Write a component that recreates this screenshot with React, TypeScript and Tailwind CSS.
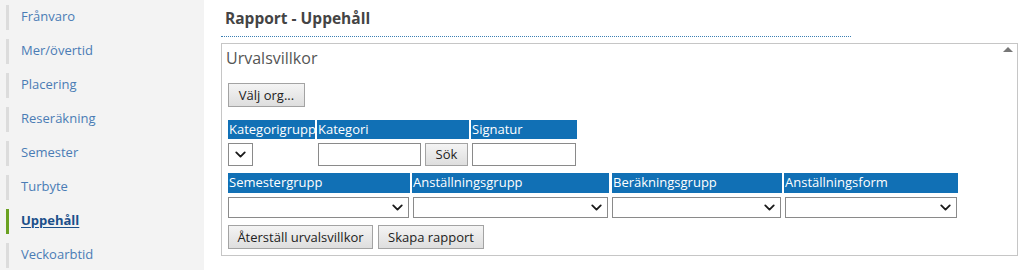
import { ChevronDown } from "lucide-react";

const menu = ["Frånvaro", "Mer/övertid", "Placering", "Reseräkning", "Semester", "Turbyte", "Uppehåll", "Veckoarbtid"];

function Header({ label, w }: { label: string; w: string }) {
  return <div className={`${w} h-full bg-[#1170b5] text-white leading-[19px] pl-[1px] whitespace-nowrap overflow-hidden`}>{label}</div>;
}

function Select({ w }: { w: string }) {
  return (
    <div className={`${w} h-[21px] border border-[#8a8a8a] bg-white flex items-center justify-end pr-[2px]`}>
      <ChevronDown size={17} strokeWidth={2.6} className="text-[#1a1a1a]" />
    </div>
  );
}

function Button({ label, w }: { label: string; w: string }) {
  return (
    <button className={`${w} h-[24px] border border-[#a3a3a3] bg-gradient-to-b from-[#f4f4f4] to-[#dedede] text-[#222] text-[13px] leading-none`}>
      {label}
    </button>
  );
}

export default function App() {
  return (
    <div className="flex w-[1023px] h-[270px] bg-white font-['Open_Sans',sans-serif] text-[13px]">
      <nav className="w-[204px] h-full bg-[#f3f3f3] pl-[6px]">
        {menu.map((item) => {
          const active = item === "Uppehåll";
          return (
            <div key={item} className="h-[34px] flex items-center">
              <div className={active ? "w-[3px] h-[25px] bg-[#6aa121]" : "w-[3px] h-[25px] bg-[#dcdcdc]"} />
              <span
                className={
                  active
                    ? "ml-[12px] text-[#1b4f8a] font-bold underline underline-offset-2"
                    : "ml-[12px] text-[#4a7cb5]"
                }
              >
                {item}
              </span>
            </div>
          );
        })}
      </nav>
      <main className="pl-[17px]">
        <div className="w-[630px] h-[37px] border-b border-dotted border-[#3c7fb3] pl-[4px] pt-[7px] text-[15.5px] font-bold text-[#444]">
          Rapport - Uppehåll
        </div>
        <section className="relative mt-[6px] w-[797px] h-[213px] border border-[#c6c6c6] pl-[6px] pt-[2px]">
          <div className="absolute right-[4px] top-[3px] w-0 h-0 border-l-[5px] border-r-[5px] border-b-[5px] border-l-transparent border-r-transparent border-b-[#777]" />
          <div className="text-[16px] text-[#555] -ml-[2px] h-[24px] leading-[24px]">Urvalsvillkor</div>
          <div className="mt-[13px]">
            <Button label="Välj org..." w="w-[77px]" />
          </div>
          <div className="mt-[13px] flex h-[19px] gap-[2px]">
            <Header label="Kategorigrupp" w="w-[87px]" />
            <Header label="Kategori" w="w-[152px]" />
            <Header label="Signatur" w="w-[106px]" />
          </div>
          <div className="mt-[4px] flex items-center h-[23px]">
            <div className="w-[25px] h-[23px] border border-[#8a8a8a] bg-white flex items-center justify-center">
              <ChevronDown size={17} strokeWidth={2.6} className="text-[#1a1a1a]" />
            </div>
            <input className="ml-[65px] w-[103px] h-[23px] border border-[#8a8a8a] bg-white outline-none" />
            <button className="ml-[4px] w-[43px] h-[23px] border border-[#a3a3a3] bg-gradient-to-b from-[#f4f4f4] to-[#dedede] text-[#222] leading-none">
              Sök
            </button>
            <input className="ml-[4px] w-[104px] h-[23px] border border-[#8a8a8a] bg-white outline-none" />
          </div>
          <div className="mt-[7px] flex h-[20px] gap-[2px]">
            <Header label="Semestergrupp" w="w-[182px]" />
            <Header label="Anställningsgrupp" w="w-[197px]" />
            <Header label="Beräkningsgrupp" w="w-[170px] ml-[1px]" />
            <Header label="Anställningsform" w="w-[174px]" />
          </div>
          <div className="mt-[4px] flex gap-[4px]">
            <Select w="w-[181px]" />
            <Select w="w-[195px]" />
            <Select w="w-[169px]" />
            <Select w="w-[172px]" />
          </div>
          <div className="mt-[7px] flex gap-[5px]">
            <Button label="Återställ urvalsvillkor" w="w-[145px]" />
            <Button label="Skapa rapport" w="w-[106px]" />
          </div>
        </section>
      </main>
    </div>
  );
}
